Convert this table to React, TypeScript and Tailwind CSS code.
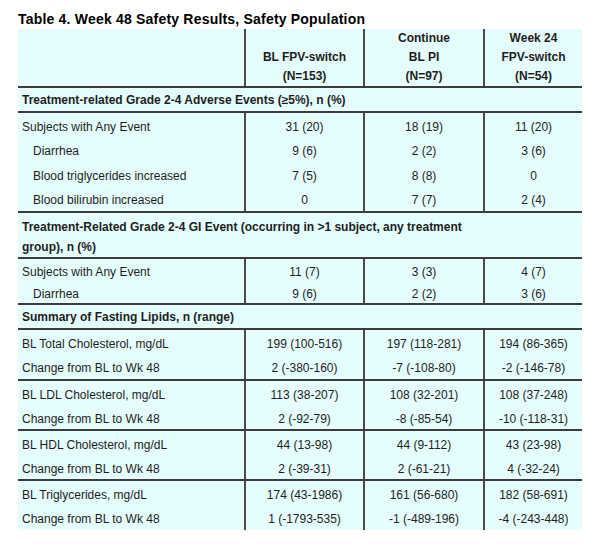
type Row = { label: string; indent?: boolean; values: [string, string, string] };

const groups: { heading: string[]; rows: Row[][] }[] = [
  {
    heading: ['Treatment-related Grade 2-4 Adverse Events (≥5%), n (%)'],
    rows: [
      [
        { label: 'Subjects with Any Event', values: ['31 (20)', '18 (19)', '11 (20)'] },
        { label: 'Diarrhea', indent: true, values: ['9 (6)', '2 (2)', '3 (6)'] },
        { label: 'Blood triglycerides increased', indent: true, values: ['7 (5)', '8 (8)', '0'] },
        { label: 'Blood bilirubin increased', indent: true, values: ['0', '7 (7)', '2 (4)'] },
      ],
    ],
  },
  {
    heading: [
      'Treatment-Related Grade 2-4 GI Event (occurring in >1 subject, any treatment',
      'group), n (%)',
    ],
    rows: [
      [
        { label: 'Subjects with Any Event', values: ['11 (7)', '3 (3)', '4 (7)'] },
        { label: 'Diarrhea', indent: true, values: ['9 (6)', '2 (2)', '3 (6)'] },
      ],
    ],
  },
  {
    heading: ['Summary of Fasting Lipids, n (range)'],
    rows: [
      [
        { label: 'BL Total Cholesterol, mg/dL', values: ['199 (100-516)', '197 (118-281)', '194 (86-365)'] },
        { label: 'Change from BL to Wk 48', values: ['2 (-380-160)', '-7 (-108-80)', '-2 (-146-78)'] },
      ],
      [
        { label: 'BL LDL Cholesterol, mg/dL', values: ['113 (38-207)', '108 (32-201)', '108 (37-248)'] },
        { label: 'Change from BL to Wk 48', values: ['2 (-92-79)', '-8 (-85-54)', '-10 (-118-31)'] },
      ],
      [
        { label: 'BL HDL Cholesterol, mg/dL', values: ['44 (13-98)', '44 (9-112)', '43 (23-98)'] },
        { label: 'Change from BL to Wk 48', values: ['2 (-39-31)', '2 (-61-21)', '4 (-32-24)'] },
      ],
      [
        { label: 'BL Triglycerides, mg/dL', values: ['174 (43-1986)', '161 (56-680)', '182 (58-691)'] },
        { label: 'Change from BL to Wk 48', values: ['1 (-1793-535)', '-1 (-489-196)', '-4 (-243-448)'] },
      ],
    ],
  },
];

const grid = 'grid grid-cols-[226px_119px_120px_99px]';
const colLine = 'border-l-2 border-[#4a4a4a]';
const hLine = 'border-b-2 border-[#3c3c3c]';

// hauteur de ligne par bloc, relevée sur la capture
function rowHeight(gi: number, bi: number) {
  if (gi === 1) return 'h-[22px]';
  if (gi === 2 && (bi === 1 || bi === 2)) return 'h-[24px]';
  return 'h-[24.5px]';
}

function Block({ rows, last, rowH }: { rows: Row[]; last: boolean; rowH: string }) {
  return (
    <div className={`${grid} ${last ? '' : hLine}`}>
      {rows.map((r, i) => (
        <div key={i} className="contents">
          <div className={`${rowH} flex items-center pt-[3px] ${r.indent ? 'pl-[15px]' : 'pl-1'}`}>
            {r.label}
          </div>
          {r.values.map((v, j) => (
            <div key={j} className={`${rowH} ${colLine} flex items-center justify-center pt-[3px]`}>
              {v}
            </div>
          ))}
        </div>
      ))}
    </div>
  );
}

export default function App() {
  return (
    <div
      className="min-h-[546px] bg-white pl-[18px] pt-[10px] text-[12px] text-[#1e1e1e]"
      style={{ fontFamily: '"Liberation Sans", Arial, sans-serif' }}
    >
      <h1 className="text-[14px] leading-[19px] font-bold tracking-[0.2px] text-black">
        Table 4. Week 48 Safety Results, Safety Population
      </h1>
      <div className="w-[564px] bg-[#e5fdfc]">
        {/* en-tête des colonnes */}
        <div className={`${grid} h-[59px] ${hLine} font-bold leading-[19px]`}>
          <div />
          <div className={`${colLine} flex flex-col items-center justify-end`}>
            <span>BL FPV-switch</span>
            <span>(N=153)</span>
          </div>
          <div className={`${colLine} flex flex-col items-center justify-end`}>
            <span>Continue</span>
            <span>BL PI</span>
            <span>(N=97)</span>
          </div>
          <div className={`${colLine} flex flex-col items-center justify-end`}>
            <span>Week 24</span>
            <span>FPV-switch</span>
            <span>(N=54)</span>
          </div>
        </div>

        {groups.map((g, gi) => (
          <div key={gi}>
            <div
              className={`${hLine} px-1 font-bold ${
                g.heading.length > 1 ? 'pt-[4px] leading-[20px]' : 'flex h-[25px] items-center pt-[1px]'
              } ${g.heading.length > 1 ? 'h-[46px]' : ''}`}
            >
              {g.heading.map((h, hi) => (
                <div key={hi}>{h}</div>
              ))}
            </div>
            {g.rows.map((b, bi) => (
              <Block
                key={bi}
                rows={b}
                rowH={rowHeight(gi, bi)}
                last={gi === groups.length - 1 && bi === g.rows.length - 1}
              />
            ))}
          </div>
        ))}
      </div>
    </div>
  );
}
